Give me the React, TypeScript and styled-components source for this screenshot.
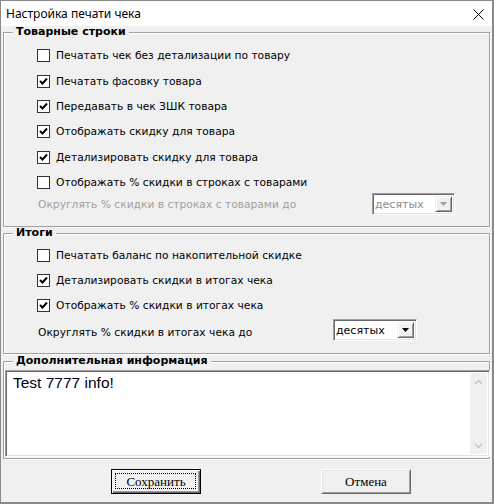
import styled, { createGlobalStyle } from 'styled-components';

const GlobalStyle = createGlobalStyle`
  html, body {
    margin: 0;
    padding: 0;
    background: #ffffff;
  }
  body {
    font-family: "DejaVu Sans", "Liberation Sans", sans-serif;
  }
`;

const Window = styled.div`
  box-sizing: border-box;
  width: 494px;
  height: 504px;
  display: flex;
  flex-direction: column;
  background: #f0f0f0;
  border-top: 1px solid #8a8a8a;
  border-left: 1px solid #8a8a8a;
  border-right: 2px solid #8a8a8a;
  border-bottom: 2px solid #8a8a8a;
`;

const TitleBar = styled.div`
  height: 25px;
  flex: none;
  display: flex;
  align-items: center;
  justify-content: space-between;
  background: #ffffff;
  padding-left: 5px;
  padding-right: 8px;
`;

const TitleText = styled.span`
  font-family: "Noto Sans", "Liberation Sans", sans-serif;
  font-size: 12px;
  color: #000000;
`;

const CloseButton = styled.span`
  display: flex;
  width: 11px;
  height: 11px;
  margin-top: 1px;
`;

const Body = styled.div`
  display: flex;
  flex-direction: column;
  padding-left: 2px;
`;

const GroupBox = styled.fieldset<{ $h: number; $top?: number }>`
  box-sizing: border-box;
  width: 487px;
  height: ${(p) => p.$h}px;
  margin: ${(p) => p.$top || 0}px 0 0 0;
  padding: 0;
  min-width: 0;
  border: 1px solid #a0a0a0;
  box-shadow: inset 1px 1px #ffffff, 1px 1px #ffffff;
`;

const Legend = styled.legend`
  margin-left: 9px;
  padding: 0 3px;
  height: 12px;
  line-height: 12px;
  font-size: 11px;
  font-weight: 700;
  color: #000000;
  background: #f0f0f0;
`;

const Rows = styled.div<{ $pt: number }>`
  display: flex;
  flex-direction: column;
  padding-top: ${(p) => p.$pt}px;
`;

const CheckRow = styled.label<{ $h?: number }>`
  display: flex;
  align-items: center;
  height: ${(p) => p.$h || 25}px;
  padding-left: 33px;
  gap: 6px;
  font-size: 10.7px;
  color: #000000;
`;

const Box = styled.span`
  box-sizing: border-box;
  width: 13px;
  height: 13px;
  flex: none;
  display: flex;
  align-items: center;
  justify-content: center;
  background: #ffffff;
  border: 1px solid #333333;
`;

const RoundRow = styled.div<{ $mt: number }>`
  display: flex;
  align-items: center;
  height: 22px;
  margin-top: ${(p) => p.$mt}px;
  padding-left: 34px;
`;

const RoundLabel = styled.span<{ $w: number; $disabled?: boolean; $dy?: number }>`
  width: ${(p) => p.$w}px;
  flex: none;
  font-size: 10.7px;
  color: ${(p) => (p.$disabled ? '#a0a0a0' : '#000000')};
  margin-top: ${(p) => p.$dy || 0}px;
`;

const Combo = styled.div<{ $w: number }>`
  box-sizing: border-box;
  width: ${(p) => p.$w}px;
  height: 22px;
  display: flex;
  align-items: center;
  background: #ffffff;
  border-top: 1px solid #a0a0a0;
  border-left: 1px solid #a0a0a0;
  border-right: 1px solid #ffffff;
  border-bottom: 1px solid #ffffff;
  box-shadow: inset 1px 1px #696969, inset -1px -1px #e3e3e3;
  padding: 2px;
`;

const ComboText = styled.span<{ $disabled?: boolean }>`
  flex: 1;
  font-size: 11px;
  color: ${(p) => (p.$disabled ? '#8c8c8c' : '#000000')};
`;

const ComboButton = styled.span`
  box-sizing: border-box;
  width: 17px;
  height: 16px;
  display: flex;
  align-items: center;
  justify-content: center;
  background: #f0f0f0;
  border-top: 1px solid #f0f0f0;
  border-left: 1px solid #f0f0f0;
  border-right: 1px solid #696969;
  border-bottom: 1px solid #696969;
  box-shadow: inset 1px 1px #ffffff, inset -1px -1px #a0a0a0;
`;

const Memo = styled.div`
  box-sizing: border-box;
  width: 485px;
  height: 87px;
  margin: 3px 0 0 1px;
  display: flex;
  background: #ffffff;
  border-top: 1px solid #a0a0a0;
  border-left: 1px solid #a0a0a0;
  border-right: 1px solid #ffffff;
  border-bottom: 1px solid #ffffff;
  box-shadow: inset 1px 1px #696969, inset -1px -1px #e3e3e3;
  padding: 2px;
`;

const MemoText = styled.div`
  flex: 1;
  padding: 1px 0 0 5px;
  font-family: "Liberation Sans", sans-serif;
  font-size: 15.5px;
  line-height: 18px;
  color: #000010;
`;

const ScrollBar = styled.div`
  width: 17px;
  flex: none;
  display: flex;
  flex-direction: column;
  justify-content: space-between;
  align-items: center;
  background: #f0f0f0;
  padding: 6px 0 5px;
`;

const ButtonBar = styled.div`
  display: flex;
  padding: 10px 0 0 108px;
  gap: 120px;
`;

const DialogButton = styled.button<{ $default?: boolean }>`
  box-sizing: border-box;
  width: 90px;
  height: 25px;
  padding: 0;
  margin: 0;
  display: flex;
  align-items: center;
  justify-content: center;
  position: relative;
  font-family: "Liberation Serif", serif;
  font-size: 13px;
  color: #000000;
  background: #f0f0f0;
  border-top: 1px solid ${(p) => (p.$default ? '#000000' : '#ffffff')};
  border-left: 1px solid ${(p) => (p.$default ? '#000000' : '#ffffff')};
  border-right: 1px solid ${(p) => (p.$default ? '#000000' : '#696969')};
  border-bottom: 1px solid ${(p) => (p.$default ? '#000000' : '#696969')};
  box-shadow: ${(p) =>
    p.$default
      ? 'inset 1px 1px #ffffff, inset -1px -1px #696969, inset -2px -2px #a0a0a0'
      : 'inset 1px 1px #e3e3e3, inset -1px -1px #a0a0a0'};
`;

const FocusRect = styled.span`
  position: absolute;
  inset: 3px 4px 4px 3px;
  border: 1px dotted #000000;
`;

const Check = () => (
  <svg width="9" height="9" viewBox="0 0 9 9">
    <path d="M1 4 L3.5 6.5 L8 1.5" stroke="#000" strokeWidth="2" fill="none" />
  </svg>
);

const Arrow = ({ color }: { color: string }) => (
  <svg width="7" height="4" viewBox="0 0 7 4">
    <path d="M0 0 H7 L3.5 4 Z" fill={color} />
  </svg>
);

const Chevron = ({ up }: { up?: boolean }) => (
  <svg width="9" height="6" viewBox="0 0 9 6">
    <path d={up ? 'M1 5 L4.5 1.5 L8 5' : 'M1 1 L4.5 4.5 L8 1'} stroke="#c8c8c8" strokeWidth="1.5" fill="none" />
  </svg>
);

interface CheckItem {
  text: string;
  checked: boolean;
}

const goodsRows: CheckItem[] = [
  { text: 'Печатать чек без детализации по товару', checked: false },
  { text: 'Печатать фасовку товара', checked: true },
  { text: 'Передавать в чек ЗШК товара', checked: true },
  { text: 'Отображать скидку для товара', checked: true },
  { text: 'Детализировать скидку для товара', checked: true },
  { text: 'Отображать % скидки в строках с товарами', checked: false },
];

const totalRows: CheckItem[] = [
  { text: 'Печатать баланс по накопительной скидке', checked: false },
  { text: 'Детализировать скидки в итогах чека', checked: true },
  { text: 'Отображать % скидки в итогах чека', checked: true },
];

const App = () => {
  return (
    <>
      <GlobalStyle />
      <Window>
        <TitleBar>
          <TitleText>Настройка печати чека</TitleText>
          <CloseButton>
            <svg width="11" height="11" viewBox="0 0 11 11">
              <path d="M0.5 0.5 L10.5 10.5 M10.5 0.5 L0.5 10.5" stroke="#000" strokeWidth="1" />
            </svg>
          </CloseButton>
        </TitleBar>
        <Body>
          <GroupBox $h={201}>
            <Legend>Товарные строки</Legend>
            <Rows $pt={5}>
              {goodsRows.map((x) => (
                <CheckRow key={x.text} $h={25.4}>
                  <Box>{x.checked && <Check />}</Box>
                  {x.text}
                </CheckRow>
              ))}
              <RoundRow $mt={-2}>
                <RoundLabel $w={334} $disabled>
                  Округлять % скидки в строках с товарами до
                </RoundLabel>
                <Combo $w={83}>
                  <ComboText $disabled>десятых</ComboText>
                  <ComboButton>
                    <Arrow color="#a0a0a0" />
                  </ComboButton>
                </Combo>
              </RoundRow>
            </Rows>
          </GroupBox>
          <GroupBox $h={127}>
            <Legend>Итоги</Legend>
            <Rows $pt={4}>
              {totalRows.map((x) => (
                <CheckRow key={x.text}>
                  <Box>{x.checked && <Check />}</Box>
                  {x.text}
                </CheckRow>
              ))}
              <RoundRow $mt={1}>
                <RoundLabel $w={295} $dy={5}>
                  Округлять % скидки в итогах чека до
                </RoundLabel>
                <Combo $w={84}>
                  <ComboText>десятых</ComboText>
                  <ComboButton>
                    <Arrow color="#000000" />
                  </ComboButton>
                </Combo>
              </RoundRow>
            </Rows>
          </GroupBox>
          <GroupBox $h={104} $top={1}>
            <Legend>Дополнительная информация</Legend>
            <Memo>
              <MemoText>Test 7777 info!</MemoText>
              <ScrollBar>
                <Chevron up />
                <Chevron />
              </ScrollBar>
            </Memo>
          </GroupBox>
          <ButtonBar>
            <DialogButton $default>
              <FocusRect />
              Сохранить
            </DialogButton>
            <DialogButton>Отмена</DialogButton>
          </ButtonBar>
        </Body>
      </Window>
    </>
  );
};

export default App;
